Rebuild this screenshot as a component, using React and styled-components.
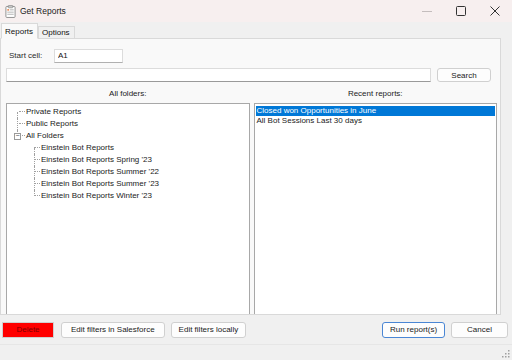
import React from 'react';
import styled, { createGlobalStyle } from 'styled-components';

const Global = createGlobalStyle`
  html, body {
    margin: 0;
    padding: 0;
    background: #f0f0f0;
  }
  * {
    box-sizing: border-box;
  }
`;

const folders = [
  'Einstein Bot Reports',
  "Einstein Bot Reports Spring '23",
  "Einstein Bot Reports Summer '22",
  "Einstein Bot Reports Summer '23",
  "Einstein Bot Reports Winter '23",
];

const recent = ['Closed won Opportunities in June', 'All Bot Sessions Last 30 days'];

export default function App() {
  return (
    <Window>
      <Global />
      <TitleBar>
        <AppIcon viewBox="0 0 12 14">
          <rect x="1" y="1.5" width="10" height="12" rx="1" fill="#fff" stroke="#8a8a8a" />
          <rect x="3.5" y="0.5" width="5" height="2.5" rx="0.5" fill="#c8c8c8" stroke="#777" strokeWidth="0.6" />
          <rect x="2.5" y="4.5" width="2" height="1.5" fill="#e6743a" />
          <line x1="5.5" y1="5.2" x2="9.5" y2="5.2" stroke="#999" strokeWidth="0.8" />
          <line x1="2.5" y1="7.7" x2="9.5" y2="7.7" stroke="#999" strokeWidth="0.8" />
          <line x1="2.5" y1="10" x2="9.5" y2="10" stroke="#999" strokeWidth="0.8" />
        </AppIcon>
        <Title>Get Reports</Title>
        <Controls>
          <CtrlButton>
            <svg width="10" height="10" viewBox="0 0 10 10">
              <line x1="0" y1="5.5" x2="10" y2="5.5" stroke="#c4bdbd" strokeWidth="1" />
            </svg>
          </CtrlButton>
          <CtrlButton>
            <svg width="10" height="10" viewBox="0 0 10 10">
              <rect x="0.5" y="0.5" width="9" height="9" rx="1" fill="none" stroke="#333" strokeWidth="1" />
            </svg>
          </CtrlButton>
          <CtrlButton>
            <svg width="10" height="10" viewBox="0 0 10 10">
              <path d="M0.5 0.5 L9.5 9.5 M9.5 0.5 L0.5 9.5" stroke="#333" strokeWidth="1" />
            </svg>
          </CtrlButton>
        </Controls>
      </TitleBar>

      <TabStrip>
        <Tab $active>Reports</Tab>
        <Tab>Options</Tab>
      </TabStrip>

      <TabPage>
        <StartRow>
          <Label>Start cell:</Label>
          <CellInput defaultValue="A1" />
        </StartRow>
        <SearchRow>
          <SearchInput />
          <Button $wide>Search</Button>
        </SearchRow>
        <Columns>
          <Column>
            <Caption>All folders:</Caption>
            <ListBox>
              <TreeRow $level={0} $first>
                <Branch />
                Private Reports
              </TreeRow>
              <TreeRow $level={0}>
                <Branch />
                Public Reports
              </TreeRow>
              <TreeRow $level={0} $last>
                <Branch />
                <Toggle>−</Toggle>
                All Folders
              </TreeRow>
              {folders.map((f, i) => (
                <TreeRow key={f} $level={1} $first={i === 0} $last={i === folders.length - 1}>
                  <Branch />
                  {f}
                </TreeRow>
              ))}
            </ListBox>
          </Column>
          <Column>
            <Caption>Recent reports:</Caption>
            <ListBox>
              {recent.map((r, i) => (
                <ListItem key={r} $selected={i === 0}>
                  {r}
                </ListItem>
              ))}
            </ListBox>
          </Column>
        </Columns>
      </TabPage>

      <Footer>
        <DeleteButton>Delete</DeleteButton>
        <Button $pad={9}>Edit filters in Salesforce</Button>
        <Button $pad={7}>Edit filters locally</Button>
        <Spacer />
        <Button $primary $pad={7}>Run report(s)</Button>
        <Button $pad={15}>Cancel</Button>
      </Footer>
      <StatusBar>
        <Grip viewBox="0 0 8 8">
          {[
            [6, 0],
            [6, 3],
            [3, 3],
            [6, 6],
            [3, 6],
            [0, 6],
          ].map(([x, y]) => (
            <rect key={x + '-' + y} x={x} y={y} width="1.5" height="1.5" fill="#a0a0a0" />
          ))}
        </Grip>
      </StatusBar>
    </Window>
  );
}

const Window = styled.div`
  width: 512px;
  height: 360px;
  display: flex;
  flex-direction: column;
  font-family: 'Liberation Sans', Arial, sans-serif;
  font-size: 8px;
  color: #2a2a2a;
  background: #f0f0f0;
  overflow: hidden;
`;

const TitleBar = styled.div`
  height: 22px;
  display: flex;
  align-items: center;
  background: #f7efef;
  padding-left: 5px;
`;

const AppIcon = styled.svg`
  width: 11px;
  height: 13px;
`;

const Title = styled.span`
  margin-left: 4px;
  font-size: 8.5px;
  color: #222;
`;

const Controls = styled.div`
  margin-left: auto;
  display: flex;
`;

const CtrlButton = styled.div`
  width: 34px;
  height: 22px;
  display: flex;
  align-items: center;
  justify-content: center;
`;

const TabStrip = styled.div`
  height: 16px;
  display: flex;
  align-items: flex-end;
  padding-left: 1px;
  position: relative;
  z-index: 1;
`;

const Tab = styled.div`
  height: ${(p) => (p.$active ? '16px' : '13px')};
  padding: 0 4px 0 3px;
  display: flex;
  align-items: center;
  background: ${(p) => (p.$active ? '#f9f9f9' : '#f0f0f0')};
  border: 1px solid #d9d9d9;
  border-bottom: ${(p) => (p.$active ? '1px solid #f9f9f9' : '1px solid #d9d9d9')};
  margin-bottom: -1px;
  color: #111;
`;

const TabPage = styled.div`
  height: 277px;
  width: 501px;
  background: #f9f9f9;
  border: 1px solid #d9d9d9;
  display: flex;
  flex-direction: column;
  padding: 9px 3px 0 5px;
`;

const StartRow = styled.div`
  display: flex;
  align-items: center;
  padding-left: 3px;
  height: 15px;
`;

const Label = styled.span`
  width: 45px;
`;

const CellInput = styled.input`
  width: 69px;
  height: 14px;
  border: 1px solid #dcdcdc;
  border-bottom-color: #b0b0b0;
  background: #fff;
  font: inherit;
  padding: 0 3px;
  outline: none;
  color: #111;
`;

const SearchRow = styled.div`
  display: flex;
  align-items: center;
  margin-top: 5px;
  height: 14px;
`;

const SearchInput = styled.input`
  width: 425px;
  height: 14px;
  border: 1px solid #dcdcdc;
  border-bottom-color: #9a9a9a;
  background: #fff;
  outline: none;
`;

const Button = styled.div`
  height: ${(p) => (p.$wide ? '14px' : '16px')};
  padding: 0 ${(p) => p.$pad ?? 6}px;
  min-width: ${(p) => (p.$wide ? '54px' : 'auto')};
  margin-left: ${(p) => (p.$primary ? '0' : '6px')};
  display: flex;
  align-items: center;
  justify-content: center;
  background: #fdfdfd;
  border: 1px solid ${(p) => (p.$primary ? '#4a86d4' : '#d0d0d0')};
  border-radius: 3px;
  color: #1a1a1a;
  white-space: nowrap;
`;

const DeleteButton = styled.div`
  width: 52px;
  height: 16px;
  display: flex;
  align-items: center;
  justify-content: center;
  background: #ff0000;
  border: 1px solid #d0d0d0;
  color: #800000;
`;

const Columns = styled.div`
  flex: 1;
  display: flex;
  gap: 4px;
  margin-top: 7px;
  min-height: 0;
`;

const Column = styled.div`
  flex: 1;
  display: flex;
  flex-direction: column;
  min-width: 0;
`;

const Caption = styled.div`
  text-align: center;
  height: 10px;
  line-height: 10px;
  color: #222;
  margin-bottom: 4px;
`;

const ListBox = styled.div`
  flex: 1;
  background: #fff;
  border: 1px solid #a8a8a8;
  border-bottom: none;
  padding: 2px 1px;
  overflow: hidden;
`;

const TreeRow = styled.div`
  position: relative;
  height: 12px;
  line-height: 12px;
  padding-left: ${(p) => 19 + p.$level * 15}px;
  color: #222;
  white-space: nowrap;
  &::before {
    content: '';
    position: absolute;
    left: ${(p) => 9 + p.$level * 17}px;
    top: ${(p) => (p.$first ? '6px' : '0')};
    height: ${(p) => (p.$first || p.$last ? '6px' : '12px')};
    border-left: 1px dotted #a0a0a0;
  }
`;

const Branch = styled.span`
  display: inline-block;
  width: 6px;
  margin-right: 1px;
  vertical-align: middle;
  border-top: 1px dotted #a0a0a0;
  margin-left: -8px;
`;

const Toggle = styled.span`
  position: absolute;
  left: 6px;
  top: 3px;
  width: 7px;
  height: 7px;
  border: 1px solid #9a9a9a;
  background: #fff;
  font-size: 7px;
  line-height: 4px;
  text-align: center;
  color: #444;
`;

const ListItem = styled.div`
  height: 10px;
  line-height: 10px;
  padding-left: 1px;
  background: ${(p) => (p.$selected ? '#0078d7' : 'transparent')};
  color: ${(p) => (p.$selected ? '#fff' : '#222')};
  white-space: nowrap;
`;

const Footer = styled.div`
  height: 29px;
  display: flex;
  align-items: center;
  padding: 0 4px 0 2px;
  & > div:first-child + div {
    margin-left: 7px;
  }
`;

const Spacer = styled.div`
  flex: 1;
`;

const StatusBar = styled.div`
  flex: 1;
  border-top: 1px solid #e6e6e6;
  display: flex;
  justify-content: flex-end;
  align-items: flex-end;
  padding: 0 2px 2px 0;
`;

const Grip = styled.svg`
  width: 8px;
  height: 8px;
`;
